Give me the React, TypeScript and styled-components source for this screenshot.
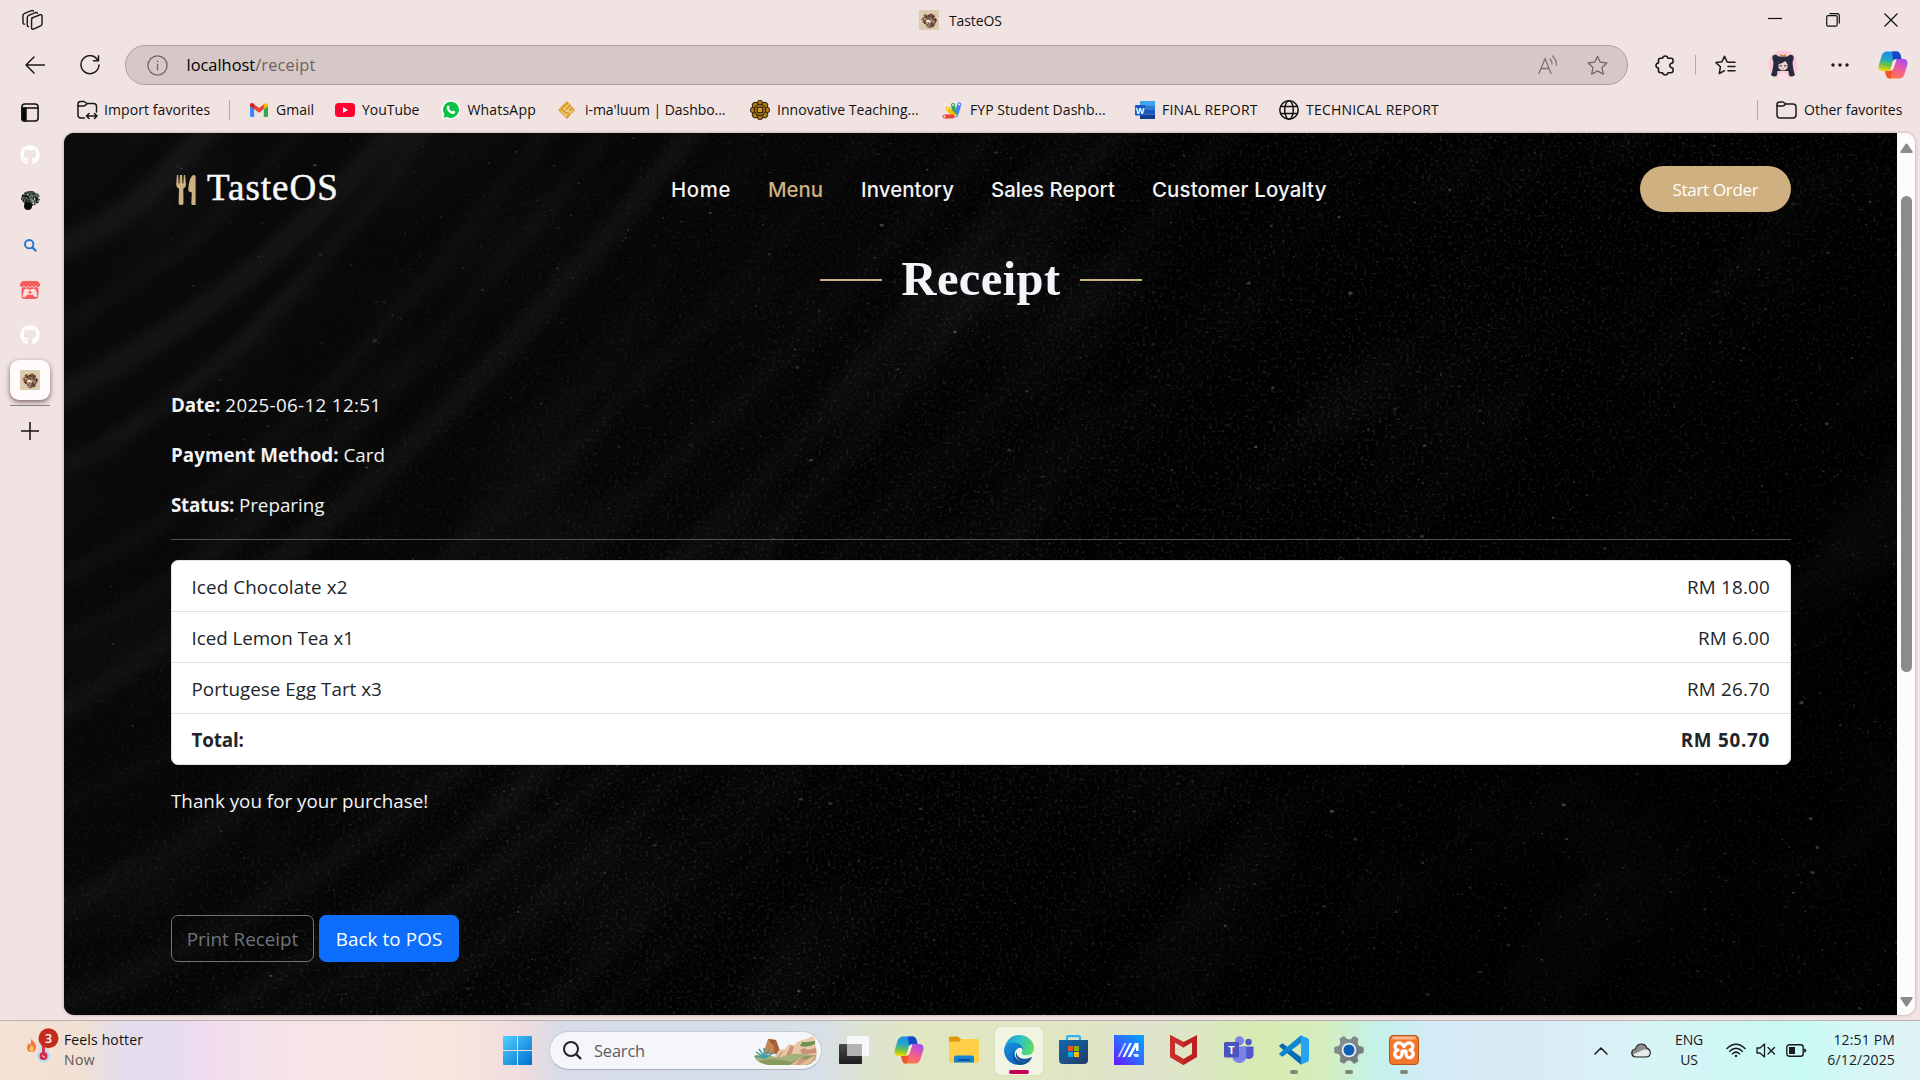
import React from "react";
import styled, { createGlobalStyle, css } from "styled-components";
import { FaGithub } from "react-icons/fa";
import { SiItchdotio } from "react-icons/si";

const GlobalStyle = createGlobalStyle`
  * { box-sizing: border-box; }
  html, body { margin: 0; padding: 0; }
  body { font-family: "Open Sans", "Noto Sans", sans-serif; overflow: hidden; }
`;

/* ---------- window frame ---------- */

const Screen = styled.div`
  width: 1920px;
  height: 1080px;
  display: flex;
  flex-direction: column;
  background: #f1e3e2;
  color: #111;
  white-space: nowrap;
`;

const TitleBar = styled.header`
  display: flex;
  height: 40px;
  align-items: center;
  padding-left: 22px;
`;

const TabTitle = styled.div`
  display: flex;
  align-items: center;
  gap: 10px;
  margin-left: 876px;
  font-size: 14px;
  letter-spacing: -0.1px;
`;

const WindowControls = styled.div`
  display: flex;
  align-items: center;
  gap: 44px;
  margin-left: auto;
  padding-right: 22px;
`;

const AddressRow = styled.div`
  display: flex;
  height: 50px;
  align-items: center;
  padding-left: 24px;
`;

const IconSlot = styled.div<{ $w: number; $ml?: number }>`
  display: flex;
  flex: none;
  justify-content: center;
  align-items: center;
  width: ${(p) => p.$w}px;
  margin-left: ${(p) => p.$ml ?? 0}px;
`;

const AddressBar = styled.div`
  display: flex;
  align-items: center;
  width: 1503px;
  height: 40px;
  margin-left: 25px;
  padding: 0 19px 0 21px;
  border: 1px solid #ab9f9e;
  border-radius: 20px;
  background: #d6c8c7;
  font-size: 16.4px;
`;

const Url = styled.div`
  flex: 1;
  margin-left: 18.5px;
  padding-bottom: 2px;
  color: #000;
  span { color: #6b6362; letter-spacing: 0.16px; }
`;

const VLine = styled.div<{ $ml: number }>`
  width: 1px;
  height: 20px;
  margin-left: ${(p) => p.$ml}px;
  background: #b5a8a7;
`;

const Body = styled.div`
  display: flex;
  height: 930px;
`;

const TabRail = styled.nav`
  display: flex;
  flex-direction: column;
  align-items: center;
  width: 64px;
  padding-top: 13px;
  padding-right: 4px;
`;

const RailItem = styled.div<{ $active?: boolean }>`
  display: flex;
  flex: none;
  align-items: center;
  justify-content: center;
  width: 40px;
  height: 40px;
  margin-bottom: 5px;
  border-radius: 9px;
  ${(p) =>
    p.$active &&
    css`
      background: #fffafb;
      box-shadow: 0 2px 5px rgba(60, 30, 30, 0.65);
    `}
`;

const RailToggle = styled.div`
  height: 32px;
  padding-right: 1px;
`;

const RailDivider = styled.div`
  width: 40px;
  height: 1px;
  margin-bottom: 16px;
  background: #8c8281;
`;

const Column = styled.div`
  display: flex;
  flex-direction: column;
  width: 1856px;
`;

const BookmarkBar = styled.div`
  display: flex;
  align-items: center;
  height: 43px;
  padding: 0 18px 4px 13px;
`;

const Bookmark = styled.div<{ $w: number; $gap?: number; $ls?: number }>`
  display: flex;
  flex: none;
  align-items: center;
  gap: ${(p) => p.$gap ?? 8}px;
  width: ${(p) => p.$w}px;
  font-size: 14px;
  letter-spacing: ${(p) => p.$ls ?? 0}px;
  svg { flex: none; }
`;

/* ---------- web page ---------- */

const Viewport = styled.div`
  display: flex;
  width: 1851px;
  height: 882px;
  border-radius: 10px;
  overflow: hidden;
  box-shadow: 0 0 3px rgba(90, 60, 60, 0.45);
`;

const Page = styled.main`
  position: relative;
  width: 1833px;
  padding: 0 106px 0 107px;
  background: #040404;
  color: #f2f3f5;
  isolation: isolate;
  font-size: 18.8px;
`;

const Backdrop = styled.svg`
  position: absolute;
  inset: 0;
  z-index: -1;
`;

const NavBar = styled.div`
  display: flex;
  align-items: center;
  height: 112px;
`;

const Brand = styled.div`
  display: flex;
  align-items: center;
  width: 500px;
  padding: 2px 0 0 5px;
  gap: 11px;
  font: 400 37px/40px "Liberation Serif", serif;
  letter-spacing: 1px;
  color: #f8f9fb;
  span { padding-bottom: 4px; -webkit-text-stroke: 0.5px #f8f9fb; }
`;

const NavLinks = styled.nav`
  display: flex;
  flex: 1;
  padding-top: 1px;
  font: 500 20.4px/26px Inter, sans-serif;
`;

const NavLink = styled.a<{ $w: number; $ls: number; $active?: boolean }>`
  width: ${(p) => p.$w}px;
  letter-spacing: ${(p) => p.$ls}px;
  color: ${(p) => (p.$active ? "#cfb081" : "#f3f3f4")};
`;

const OrderButton = styled.button`
  width: 151px;
  height: 46px;
  border: 0;
  border-radius: 23px;
  background: #cfb081;
  color: #fff;
  font: 400 17px "Open Sans", sans-serif;
  letter-spacing: -0.3px;
`;

const Heading = styled.h1`
  display: flex;
  align-items: center;
  justify-content: center;
  gap: 19px;
  height: 70px;
  margin: 0 0 75px;
  font: 700 48.5px/66px "Liberation Serif", serif;
  letter-spacing: 0.4px;
  color: #f4f5fa;
  &::before, &::after {
    content: "";
    width: 62px;
    height: 2px;
    background: #cfb081;
  }
  span { padding-bottom: 2px; }
`;

const Line = styled.p<{ $ls?: number }>`
  margin: 0 0 20px;
  line-height: 30px;
  letter-spacing: ${(p) => p.$ls ?? 0}px;
`;

const Label = styled.strong<{ $ls?: number }>`
  font-weight: 700;
  letter-spacing: ${(p) => p.$ls ?? 0}px;
`;

const Rule = styled.hr`
  height: 1px;
  margin: -1px 0 20px;
  border: 0;
  background: #505153;
`;

const Items = styled.ul`
  margin: 0 0 21px;
  padding: 0;
  list-style: none;
  border: 1px solid #dee2e6;
  border-radius: 7px;
  background: #fff;
  color: #212529;
`;

const Item = styled.li<{ $bold?: boolean }>`
  display: flex;
  justify-content: space-between;
  height: ${(p) => (p.$bold ? 50 : 51)}px;
  padding: 1px 20px 0 19.5px;
  line-height: 50px;
  border-bottom: ${(p) => (p.$bold ? "0" : "1px solid #dee2e6")};
  font-weight: ${(p) => (p.$bold ? 700 : 400)};
`;

const Tracked = styled.span<{ $ls: number }>`
  letter-spacing: ${(p) => p.$ls}px;
`;

const Actions = styled.div`
  display: flex;
  gap: 5px;
  padding-top: 79px;
`;

const ActionButton = styled.button<{ $primary?: boolean }>`
  width: ${(p) => (p.$primary ? 140 : 143)}px;
  height: 47px;
  padding: 0;
  border: 1px solid ${(p) => (p.$primary ? "#0d6efd" : "#6c757d")};
  border-radius: 7px;
  background: ${(p) => (p.$primary ? "#0d6efd" : "transparent")};
  color: ${(p) => (p.$primary ? "#fff" : "#6c757d")};
  font: 400 18.8px "Open Sans", sans-serif;
  letter-spacing: ${(p) => (p.$primary ? 0.12 : 0)}px;
`;

const Scrollbar = styled.div`
  display: flex;
  flex-direction: column;
  align-items: center;
  width: 18px;
  padding: 10px 0 8px 0;
  background: #fcfcfc;
`;

const Thumb = styled.div`
  width: 11px;
  height: 476px;
  margin: 42px 0 auto 1px;
  border-radius: 6px;
  background: #8b8b8b;
`;

/* ---------- taskbar ---------- */

const Taskbar = styled.footer`
  display: flex;
  align-items: center;
  height: 60px;
  border-top: 1px solid #b9b0b0;
  background: linear-gradient(
    90deg,
    #f4e3d5 0, #f1e0d3 80px, #e4dded 125px, #e3dcef 160px, #f0dbf0 200px,
    #f5e3ea 260px, #f8e5e4 380px, #fae6de 440px, #f1dcde 520px, #d7dce8 560px,
    #d5dde9 700px, #d7dfe8 820px, #dde3d2 860px, #e0e7c0 930px, #e0e6c4 1060px,
    #dfe3cc 1150px, #dbe7c2 1200px, #d7ebb2 1260px, #d6edba 1320px,
    #c6f1e4 1370px, #c6f0ef 1392px, #d4ebf5 1430px, #dbebf6 1540px,
    #d8f3f6 1640px, #ccf8f5 1760px, #c9faf6 1800px, #dcf4f5 1890px, #e0f2f4 1920px
  );
`;

const Weather = styled.div`
  display: flex;
  align-items: center;
  width: 503px;
  padding: 0 0 2px 24px;
  gap: 3px;
  font-size: 14px;
  line-height: 20px;
`;

const Muted = styled.div`
  color: #5c5757;
  letter-spacing: 0.4px;
`;

const SearchPill = styled.div`
  display: flex;
  align-items: center;
  width: 273px;
  height: 39px;
  margin: 0 4px 0 17px;
  padding: 0 3px 0 13px;
  border: 1px solid #c6cbd6;
  border-bottom-color: #aab0bd;
  border-radius: 20px;
  background: #f4f6fa;
  font-size: 16.4px;
  color: #5b5d61;
  span { flex: 1; margin-left: 12px; letter-spacing: -0.15px; }
`;

const AppCell = styled.div`
  display: flex;
  justify-content: center;
  width: 55px;
`;

const AppTile = styled.div<{ $active?: boolean }>`
  display: grid;
  grid-template-rows: 8px 30px 4px 6px;
  justify-items: center;
  align-items: center;
  width: 48px;
  height: 48px;
  border-radius: 5px;
  svg { grid-row: 2; }
  ${(p) =>
    p.$active &&
    css`
      background: #f1f4e2;
      box-shadow: 0 0 1px #aab08c;
    `}
`;

const RunMark = styled.i<{ $active?: boolean }>`
  grid-row: 4;
  width: ${(p) => (p.$active ? 20 : 8)}px;
  height: 4px;
  border-radius: 2px;
  background: ${(p) => (p.$active ? "#c4005a" : "#7c8878")};
`;

const Tray = styled.div`
  display: flex;
  flex: 1;
  align-items: center;
  padding: 0 25px 0 163px;
  font-size: 14px;
  line-height: 20px;
  color: #1b1b1b;
`;

const Language = styled.div`
  width: 28px;
  margin-left: 24px;
  padding-bottom: 1px;
  text-align: center;
  letter-spacing: -0.1px;
`;

const Clock = styled.div`
  margin-left: auto;
  padding-bottom: 2px;
  text-align: right;
  letter-spacing: 0.15px;
`;

/* ---------- drawings ---------- */

function rng(seed: number) {
  let s = seed;
  return () => {
    s = (s * 1664525 + 1013904223) % 4294967296;
    return s / 4294967296;
  };
}

const rand = rng(77);
const specks = Array.from({ length: 3400 }, () => {
  const x = Math.pow(rand(), 0.6) * 1833;
  const y = rand() * 882;
  const big = rand() > 0.96;
  return { x, y, r: big ? 1 + rand() * 0.9 : 0.4 + rand() * 0.6, o: 0.04 + rand() * (big ? 0.22 : 0.17) };
});
const ridges = Array.from({ length: 21 }, (_, k) => {
  const y0 = 70 + k * 84 + rand() * 46;
  const xt = 60 + y0 * (0.98 + rand() * 0.2);
  const m = 0.76 + rand() * 0.1;
  return {
    d: `M -30 ${y0 + 20} C ${xt * 0.35} ${y0 * m} ${xt * 0.6} ${y0 * 0.52} ${xt} -30`,
    w: 8 + rand() * 18,
    o: (0.027 + rand() * 0.027) * Math.max(0.4, 1 - k / 24),
  };
});

const StoneBackdrop = () => (
  <Backdrop width="1833" height="882">
    <defs>
      <filter id="soft" x="-5%" y="-5%" width="110%" height="110%"><feGaussianBlur stdDeviation="7" /></filter>
      <filter id="grain" x="0" y="0" width="100%" height="100%">
        <feTurbulence type="fractalNoise" baseFrequency="0.33" numOctaves="3" seed="4" />
        <feColorMatrix values="0 0 0 0 1  0 0 0 0 1  0 0 0 0 1  3.2 0 0 0 -1.72" />
      </filter>
      <filter id="clouds" x="0" y="0" width="100%" height="100%">
        <feTurbulence type="fractalNoise" baseFrequency="0.004 0.011" numOctaves="3" seed="12" />
        <feColorMatrix values="0 0 0 0 1  0 0 0 0 1  0 0 0 0 1  2 0 0 0 -0.9" />
      </filter>
      <linearGradient id="fade" x1="0" y1="0" x2="1" y2="0.35">
        <stop offset="0" stopColor="#0a0a0a" /><stop offset="0.45" stopColor="#050505" /><stop offset="0.8" stopColor="#010101" />
      </linearGradient>
      <linearGradient id="dim" x1="0" y1="0" x2="1" y2="0.2">
        <stop offset="0.4" stopColor="#000" stopOpacity="0" /><stop offset="0.75" stopColor="#000" stopOpacity="0.85" />
      </linearGradient>
      <linearGradient id="sand" x1="0" y1="0" x2="1" y2="0.45">
        <stop offset="0.1" stopColor="#fff" stopOpacity="0.1" /><stop offset="0.45" stopColor="#fff" stopOpacity="0.7" /><stop offset="0.7" stopColor="#fff" /><stop offset="1" stopColor="#fff" stopOpacity="0.5" />
      </linearGradient>
      <mask id="sandMask"><rect width="1833" height="882" fill="url(#sand)" /></mask>
    </defs>
    <rect width="1833" height="882" fill="url(#fade)" />
    <g filter="url(#soft)" fill="none" stroke="#fff">
      {ridges.map((r, i) => <path key={i} d={r.d} strokeWidth={r.w} strokeOpacity={r.o} />)}
    </g>
    <rect width="1833" height="882" fill="url(#dim)" />
    <g transform="rotate(-45 916 441)" opacity="0.03"><rect x="-200" y="-600" width="2300" height="2100" filter="url(#clouds)" /></g>
    <g mask="url(#sandMask)"><rect width="1833" height="882" filter="url(#grain)" opacity="0.12" /></g>
    <g fill="#fff">
      {specks.map((s, i) => <ellipse key={i} cx={s.x} cy={s.y} rx={s.r * 1.15} ry={s.r * 0.85} fillOpacity={s.o} />)}
    </g>
  </Backdrop>
);

const stroke = { fill: "none", stroke: "#1a1a1a", strokeWidth: 1.5, strokeLinecap: "round", strokeLinejoin: "round" } as const;

const WorkspacesIcon = () => (
  <svg width="22" height="22" viewBox="0 0 22 22" {...stroke}>
    <path d="M10 9 L19 5.5 Q21 5 21 7 V15 Q21 16.500 19.500 17.200 L12 20.500 Q10 21 10 19 V11 Q10 9.500 11.500 8.500" />
    <path d="M6.800 17.800 Q5.500 18 5.500 16 V9 Q5.500 7 7 6.200 L14 3.200 Q15.700 2.700 16.200 4" />
    <path d="M2.800 15.300 Q1 15.500 1 13.500 V6.500 Q1 4.800 2.700 4 L10 1.200 Q11.500 .8 12 1.800" />
  </svg>
);
const BackIcon = () => <svg width="20" height="18" viewBox="0 0 20 18" {...stroke}><path d="M9 1 L1 9 L9 17 M1 9 H19.500" /></svg>;
const ReloadIcon = () => <svg width="20" height="20" viewBox="0 0 20 20" {...stroke}><path d="M18 5.500 A9 9 0 1 0 19 10 M18.500 .8 V5.800 H13.500" /></svg>;
const InfoIcon = () => <svg width="21" height="21" viewBox="0 0 21 21" {...stroke} stroke="#6f6766" strokeWidth="1.3"><circle cx="10.500" cy="10.500" r="9.600" /><path d="M10.500 9.500 V15 M10.500 6 v.5" /></svg>;
const ReadAloudIcon = () => <svg width="20" height="20" viewBox="0 0 20 20" {...stroke} stroke="#7d7574" strokeWidth="1.3"><path d="M1 18.500 L7 3.500 L13 18.500 M3 13.500 H11 M12 4 Q14 6 14 9 M14.500 1 Q18.500 4.500 18.500 10" /></svg>;
const StarIcon = () => <svg width="21" height="21" viewBox="0 0 21 21" {...stroke} stroke="#6f6766" strokeWidth="1.3"><path d="M10.500 1.200 L13.300 7.200 L19.900 8 L15 12.500 L16.300 19.200 L10.500 15.900 L4.700 19.200 L6 12.500 L1.100 8 L7.700 7.200 Z" /></svg>;
const PuzzleIcon = () => <svg width="20" height="21" viewBox="0 0 20 21" {...stroke} strokeWidth="1.6"><path d="M7.500 3.300 Q8 1 10.300 1 Q12.600 1 13 3.300 H16 Q18 3.300 18 5.200 V7.800 Q14.800 8.300 14.800 10.500 Q14.800 12.700 18 13.200 V15.800 Q18 17.700 16 17.700 H13 Q12.600 20 10.300 20 Q8 20 7.500 17.700 H5.500 Q3.500 17.700 3.500 15.800 V13 Q1 12.700 1 10.500 Q1 8.300 3.500 8 V5.200 Q3.500 3.300 5.500 3.300 Z" /></svg>;
const FavoritesIcon = () => <svg width="21" height="20" viewBox="0 0 21 20" {...stroke}><path d="M13.500 7.200 L12 6.800 L9.500 1.200 L7 6.800 L1 7.600 L5.400 11.800 L4.300 18.500 L9.500 15.700 M13.500 7.200 H20 M13 11.500 H20 M13 15.800 H20" /></svg>;
const Avatar = () => (
  <svg width="30" height="30" viewBox="0 0 30 30">
    <circle cx="15" cy="15" r="14.600" fill="#fbcad8" />
    <path d="M4.500 6 Q8 3.500 10.500 6.500 H19.500 Q22 3.500 25.500 6 Q26 9 24.500 12 Q25 20 27 25 Q23 28 21 25 L20.500 21 H9.500 L9 25 Q7 28 3 25 Q5 20 5.500 12 Q4 9 4.500 6Z" fill="#262c3e" />
    <path d="M10.500 11 H19.500 V18 Q15 23 10.500 18Z" fill="#f5d5cb" /><path d="M10 14.500 Q10.500 7 15 8 Q20 7 20.500 15 Q18.500 13.500 17.500 11 Q14 13.500 10 14.500Z" fill="#262c3e" />
    <path d="M9.500 29 Q11 22.500 15 22 Q19 22.500 20.500 29 Q15 31 9.500 29" fill="#fbdfe9" /><path d="M12 6.500 L12.500 4 L15 5.500 L17.500 4 L18 6.500Z" fill="#c5822d" />
    <path d="M11.600 15.800 h2.400 M16 15.800 h2.400" stroke="#4a5c86" strokeWidth="1.400" /><path d="M14 18.800 h2" stroke="#d0707a" strokeWidth=".8" />
  </svg>
);
const CopilotIcon = ({ id }: { id: string }) => (
  <svg width="30" height="28" viewBox="0 0 30 28">
    <defs>
      <linearGradient id={id + "a"} x1="0.500" y1="0" x2="0.350" y2="1"><stop offset="0" stopColor="#1b8cf0" /><stop offset=".4" stopColor="#22a6c6" /><stop offset=".7" stopColor="#6cc04a" /><stop offset="1" stopColor="#f6d900" /></linearGradient>
      <linearGradient id={id + "b"} x1="0.800" y1="0" x2="0.300" y2="1"><stop offset="0" stopColor="#a24bf0" /><stop offset=".45" stopColor="#ee5aa0" /><stop offset="1" stopColor="#ff7a3d" /></linearGradient>
    </defs>
    <path d="M14 .5 H19 Q21.500 .5 22.500 4 L23.500 8 H18 Q15.500 8 14.500 11 L12 20 H5 Q-.5 20 .8 14 L3.500 5 Q5 .5 9 .5Z" fill={`url(#${id}a)`} />
    <path d="M14 .5 H18.500 Q21.500 .5 22.500 4 L23.500 8 H18 Q16 8 15 9.500Z" fill="#1746c9" />
    <path d="M18.500 8 H25 Q30.500 8 29.200 14 L26.500 23 Q25 27.500 21 27.500 H11.500 Q9 27.500 8 24 L7 20 H12 Q14.500 20 15.500 17Z" fill={`url(#${id}b)`} />
    <path d="M7 20 H12 Q14 20 15 18.500 L12.500 27.500 H11.500 Q9 27.500 8 24Z" fill="#f2542d" />
    <path d="M15.600 11 Q16 9.800 17.300 9.800 H18 L15 18.500 Q14.500 19.300 13.300 19.300 H13Z" fill="#f3e9ec" />
  </svg>
);
const FolderIcon = ({ arrows }: { arrows?: boolean }) => (
  <svg width="21" height="20" viewBox="0 0 21 20" {...stroke}>
    {arrows ? (
      <><path d="M7.500 18 H4 Q1 18 1 15 V4 Q1 1.500 3.500 1.500 H7 L10 3.500 H16.500 Q19.500 3.500 19.500 6.500 V12" /><path d="M10 16 H20 M12 13.500 L9.500 16 L12 18.500 M17.500 13.500 L20 16 L17.500 18.500" /></>
    ) : (
      <path d="M1 15 V4.500 Q1 2 3.500 2 H7 L10 4 H17 Q20 4 20 7 V15 Q20 18 17 18 H4 Q1 18 1 15Z" />
    )}
    <path d="M1 6 H6.500 Q8 6 10 3.700" />
  </svg>
);
const GmailIcon = () => (
  <svg width="18" height="14" viewBox="0 0 18 14">
    <path d="M0 3 L4.200 6 V14 H1.300 Q0 14 0 12.700Z" fill="#4285f4" /><path d="M18 3 L13.800 6 V14 H16.700 Q18 14 18 12.700Z" fill="#34a853" />
    <path d="M0 3 V2 C0 0 2 -.5 3.500 .8 L9 5 L14.500 .8 L13.800 6 L9 9.700 L4.200 6Z" fill="#ea4335" /><path d="M13.800 6 V1.300 C16 -.6 18 0 18 2 V3Z" fill="#fbbc04" /><path d="M0 3 V2 C0 0 2 -.6 4.200 1.300 V6Z" fill="#c5221f" />
  </svg>
);
const YouTubeIcon = () => <svg width="20" height="14" viewBox="0 0 20 14"><rect width="20" height="14" rx="3.500" fill="#ff0033" /><path d="M8 4 L13 7 L8 10Z" fill="#fff" /></svg>;
const WhatsAppIcon = () => (
  <svg width="20" height="20" viewBox="0 0 20 20">
    <path d="M10 .3 A9.500 9.500 0 1 1 5.500 18.300 L.5 19.600 L1.800 14.700 A9.500 9.500 0 0 1 10 .3Z" fill="#fff" />
    <path d="M10 1.700 A8.100 8.100 0 1 1 6 16.900 L2.500 17.800 L3.400 14.300 A8.100 8.100 0 0 1 10 1.700Z" fill="#0bc144" />
    <path d="M6.500 5.800 Q7.800 4.800 8.500 6.500 Q9 7.600 8.100 8.400 Q9 10.600 11.400 11.600 L12.500 10.600 Q14.800 11.300 14.200 12.700 Q13 14.600 10.500 13.700 Q6.500 12 5.700 8.200 Q5.600 6.600 6.500 5.800Z" fill="#fff" />
  </svg>
);
const MaluumIcon = () => (
  <svg width="18" height="18" viewBox="0 0 18 18">
    <path d="M9 0 L17 9 L9 18 L0 9Z" fill="#dba12b" />
    <path d="M10.500 3.500 L6 8 M5 6.500 L9.500 11 M12.800 6 L8 10.500 M3 9.500 L8 14.500 M10 9.500 L13.500 12.800 M15 8.500 L12.500 11 M7 15.500 L10 12.500" stroke="#f6ead2" strokeWidth="1" fill="none" />
  </svg>
);
const InnovativeIcon = () => (
  <svg width="20" height="20" viewBox="0 0 20 20">
    {[0, 45, 90, 135, 180, 225, 270, 315].map((a) => <circle key={a} cx="10" cy="3.300" r="2.900" fill="#b07a14" stroke="#33260c" strokeWidth="1" transform={`rotate(${a} 10 10)`} />)}
    <circle cx="10" cy="10" r="5.800" fill="#8f6414" stroke="#33260c" /><rect x="7.500" y="7.500" width="5" height="5" fill="#d09a27" stroke="#3a2b0c" />
  </svg>
);
const ScriptIcon = () => (
  <svg width="20" height="18" viewBox="0 0 20 18" strokeLinecap="round" strokeWidth="4">
    <path d="M14 14.500 L17.300 3.500" stroke="#4285f4" /><path d="M12.500 13.500 L11 4" stroke="#34a853" /><path d="M11.500 13.500 L5.500 7.500" stroke="#fbbc04" /><path d="M10.500 15.500 H2.500" stroke="#ea4335" />
    <g fill="#fff"><circle cx="2.500" cy="15.500" r=".9" /><circle cx="5.500" cy="7.500" r=".9" /><circle cx="11" cy="4" r=".9" /><circle cx="17.300" cy="3.500" r=".9" /><circle cx="14" cy="14.500" r=".9" /></g>
  </svg>
);
const LetterW = styled.text`font: 700 9px "Open Sans", sans-serif; fill: #fff;`;
const LetterT = styled.text`font: 700 11px "Open Sans", sans-serif; fill: #fff;`;
const LetterBadge = styled.text`font: 600 12.5px "Open Sans", sans-serif; fill: #fff;`;
const WordIcon = () => (
  <svg width="20" height="18" viewBox="0 0 20 18">
    <rect x="5" width="15" height="4.800" fill="#41a5ee" /><rect x="5" y="4.500" width="15" height="4.500" fill="#2b7cd3" /><rect x="5" y="9" width="15" height="4.500" fill="#185abd" /><rect x="5" y="13.500" width="15" height="4.500" fill="#103f91" />
    <rect y="4" width="10.500" height="10.500" rx="1" fill="#185abd" /><LetterW x=".7" y="12.500">W</LetterW>
  </svg>
);
const GlobeIcon = () => <svg width="20" height="20" viewBox="0 0 20 20" {...stroke} stroke="#111"><circle cx="10" cy="10" r="9.200" /><ellipse cx="10" cy="10" rx="4.300" ry="9.200" /><path d="M1.800 6.500 H18.200 M1.800 13.500 H18.200" /></svg>;

const bits = rng(9);
const foodDots = Array.from({ length: 130 }, () => {
  const a = bits() * 6.283, r = Math.sqrt(bits()) * 7.2;
  return { x: 10 + Math.cos(a) * r, y: 10.500 + Math.sin(a) * r, c: ["#5b3728", "#7b4a33", "#a67b63", "#3f2a24", "#6a5a60", "#c79a7c"][Math.floor(bits() * 6)] };
});
const TasteFavicon = () => (
  <svg width="20" height="20" viewBox="0 0 20 20">
    <rect width="20" height="20" fill="#dccdb0" />
    {foodDots.map((d, i) => <rect key={i} x={d.x - 0.700} y={d.y - 0.700} width="1.500" height="1.500" fill={d.c} />)}
    <ellipse cx="9" cy="11" rx="2.200" ry="1.500" fill="#efe0d2" />
  </svg>
);
const leafDots = Array.from({ length: 150 }, () => {
  const a = bits() * 6.283, r = Math.sqrt(bits());
  return { x: 10.500 + Math.cos(a) * r * 8.700, y: 8.500 + Math.sin(a) * r * 6.800, c: ["#16201a", "#222c26", "#3a443c", "#0b0f0c", "#7d867b", "#59645a"][Math.floor(bits() * 6)] };
});
const FlowerFavicon = () => (
  <svg width="20" height="20" viewBox="0 0 20 20">
    {leafDots.map((d, i) => <rect key={i} x={d.x - 0.800} y={d.y - 0.800} width="1.800" height="1.600" fill={d.c} />)}
    <circle cx="8" cy="16" r="4" fill="#0a0c0a" />
  </svg>
);
const TabsIcon = () => <svg width="18" height="19" viewBox="0 0 18 19" fill="none" stroke="#151515" strokeWidth="1.600"><rect x=".9" y="1" width="16.200" height="17" rx="3" /><path d="M1 5 H17" /><path d="M1 5 H5 V18 H3 Q1 18 1 16Z" fill="#000" /></svg>;
const FindIcon = () => <svg width="13" height="13" viewBox="0 0 13 13" fill="none" stroke="#1a76d2"><circle cx="5.200" cy="5.200" r="4.200" strokeWidth="1.900" /><path d="M8.300 8.300 L12.200 12.200" strokeWidth="2.200" /></svg>;
const PlusIcon = () => <svg width="18" height="18" viewBox="0 0 18 18" stroke="#111" strokeWidth="1.500"><path d="M9 0 V18 M0 9 H18" /></svg>;

const CutleryIcon = () => (
  <svg width="20" height="30" viewBox="0 0 20 30" fill="#cfb081">
    <path d="M.9 0 H2.200 L2.700 8.500 H3.500 L3.900 0 H6.100 L6.500 8.500 H7.300 L7.800 0 H9.100 L10 9.500 Q10.200 12 7.300 13.800 L7.500 28.500 Q7.500 30 5 30 Q2.600 30 2.600 28.500 L3 13.800 Q0 12 .2 9.500Z" />
    <path d="M17 0 Q19.600 0 19.600 1 V30 H16.800 Q15.300 30 15.300 28.500 L15.800 17.500 Q12.500 17 12.300 15.500 Q12.500 3 17 0Z" />
  </svg>
);
const Arrow = ({ down }: { down?: boolean }) => <svg width="13" height="11" viewBox="0 0 13 11" fill="#8b8b8b"><path transform={down ? "rotate(180 6.500 5.500)" : undefined} d="M5.500 1 Q6.500 0 7.500 1 L12.500 8.500 Q13 10 11.700 10 H1.300 Q0 10 .5 8.500Z" /></svg>;

const WeatherIcon = () => (
  <svg width="37" height="44" viewBox="0 0 37 44">
    <path d="M7 11 Q12 15 12 19 Q12 24 7.500 24 Q3 24 3 19.500 Q3 17 5 15 L6 17 Q7.500 15 7 11Z" fill="#f2793f" /><path d="M7.500 17 Q10 20 9.500 22 Q8.500 23.500 7 23.500 Q5 22.500 5.500 20.500Z" fill="#ffc85c" />
    <rect x="15.500" y="6" width="8" height="24" rx="4" fill="#bfe0f4" /><circle cx="19.500" cy="28" r="6.500" fill="#b9dcf2" /><path d="M19.500 10 V28" stroke="#e0344c" strokeWidth="3" /><circle cx="19.500" cy="28" r="4" fill="#d9284a" /><path d="M18 27.500 L21 29.500" stroke="#fff" strokeWidth="1" />
    <circle cx="24.500" cy="10.200" r="10" fill="#c42b1c" /><LetterBadge x="21" y="14.700">3</LetterBadge>
  </svg>
);
const StartIcon = () => (
  <svg width="29" height="29" viewBox="0 0 29 29">
    <defs><linearGradient id="win" x1="0" y1="0" x2="1" y2="1"><stop offset="0" stopColor="#52d0ff" /><stop offset="1" stopColor="#006fcf" /></linearGradient></defs>
    <path fill="url(#win)" d="M1 0 H14 V14 H0 V1Q0 0 1 0Z M15 0 H28 Q29 0 29 1 V14 H15Z M0 15 H14 V29 H1 Q0 29 0 28Z M15 15 H29 V28 Q29 29 28 29 H15Z" />
  </svg>
);
const MagnifierIcon = () => <svg width="19" height="19" viewBox="0 0 19 19" fill="none" stroke="#222"><circle cx="8" cy="8" r="7" strokeWidth="2" /><path d="M13 13 L18 18" strokeWidth="2.400" /></svg>;
const CanyonArt = () => (
  <svg width="64" height="30" viewBox="0 0 64 30">
    <path d="M9 18 L14 3 L22 4 L27 18Z" fill="#c88350" /><path d="M14 3 L22 4 L19 9Z" fill="#96573a" /><path d="M19 9 L22 4 L27 18 H21Z" fill="#a9633a" />
    <path d="M19 23 L25 14 L31 13 L35 8 L40 10 L43 6 L48 4 L60 1 L63 16 L62 25 L40 26Z" fill="#e9c6a8" />
    <path d="M35 13 L37 9 L40 10 L37 20 L31 21Z M46 14 L50 12 L54 14 L62 12 L62 17 L48 19Z" fill="#c99375" /><path d="M26 17 L30 14 L25 22 H22Z" fill="#d4a382" />
    <path d="M46 10 L48 6 L61 4 L61 8 Q53 12 46 10Z" fill="#6c9450" /><path d="M45 6 L59 0 L61 5 L52 6Z" fill="#edcdb0" />
    <path d="M0 20 Q8 16 24 22 Q44 14 62 21 Q58 29 50 29 H14 Q2 27 0 20Z" fill="#a3b27b" /><path d="M5 25 Q20 21 38 26 L52 20 L62 19 Q60 29 50 29 H16Q8 28 5 25Z" fill="#87995f" />
    <path d="M36 29 L46 22 L52 24 L61 19 Q60 28 50 29Z" fill="#e5b794" /><path d="M46 22 L52 24 L46 29 H42Z" fill="#c99a7a" />
    <path d="M11 22 L2 16 M11 22 L5 13 M11 22 L10 12 M11 22 L15 14 M11 22 L19 17 M11 22 L1 20" stroke="#3f9ea3" strokeWidth="1.500" />
  </svg>
);
const TaskViewIcon = () => (
  <svg width="30" height="28" viewBox="0 0 30 28">
    <defs><linearGradient id="tv" x1="0" y1="0" x2="0" y2="1"><stop offset="0" stopColor="#4a4a4a" /><stop offset="1" stopColor="#1e1e1e" /></linearGradient></defs>
    <rect y="8" width="23" height="20" rx="1" fill="url(#tv)" /><rect x="8" width="22" height="20" rx="1" fill="#f7f8f8" /><rect x="8" y="8" width="15" height="12" fill="#b3b3b3" />
  </svg>
);
const ExplorerIcon = () => (
  <svg width="30" height="27" viewBox="0 0 30 27">
    <path d="M0 2 Q0 .5 1.500 .5 H9 L12 3.500 H28 V10 H0Z" fill="#dd9b0c" /><path d="M0 6.500 Q0 5.500 1 5.500 H10 L12.500 3 H28.500 Q30 3 30 4.500 V25 Q30 26.500 28.500 26.500 H1.500 Q0 26.500 0 25Z" fill="#ffcf48" />
    <path d="M5 26.500 V21.500 Q5 19.500 7 19.500 H23 Q25 19.500 25 21.500 V26.500Z" fill="#1583d8" /><rect x="9" y="23" width="12" height="1.800" rx=".9" fill="#0b4d8c" />
  </svg>
);
const EdgeIcon = () => (
  <svg width="30" height="30" viewBox="0 0 30 30">
    <defs>
      <linearGradient id="e1" x1="0" y1=".3" x2="1" y2=".5"><stop offset="0" stopColor="#1c9de0" /><stop offset=".55" stopColor="#30c5c0" /><stop offset="1" stopColor="#62dc5a" /></linearGradient>
      <linearGradient id="e2" x1="0" y1="0" x2=".6" y2="1"><stop offset="0" stopColor="#1a95dd" /><stop offset="1" stopColor="#0a62c4" /></linearGradient>
    </defs>
    <path d="M.8 12 C2.500 4.500 8.500 0 15 0 C23.500 0 30 6 30 13 C30 18 26 20.500 22.500 20.500 C19.500 20.500 17 19.300 17.500 17.800 C20 14.500 17 9.500 11.500 9.500 C7 9.500 3 10.500 .8 12Z" fill="url(#e1)" />
    <path d="M0 15 C0 10 4.500 7.500 9.500 7.500 C16 7.500 20 12 18.800 15.800 C17.500 12 10.500 13 10.500 19.500 C10.500 25 15 29 19 29.300 C8.500 32 0 24.500 0 15Z" fill="url(#e2)" />
    <path d="M10.500 14.500 C8.500 21 13 27 20 26.500 C23.500 26 26 24.500 28.200 22 C26 27.500 21 30 16 30 C10 29 6.500 21 10.500 14.500Z" fill="#0f4f98" />
    <path d="M12.300 17 C12.500 13.500 15.500 12 17.800 13.200 C19.300 15 17.800 16.500 17.500 17.800 C17 19.500 20 21 23.500 20.300 C27 19.600 28 19.500 27.500 21 C22 25.500 12.500 24 12.300 17Z" fill="#f1f4e2" />
    <path d="M12.300 17 C13 24.500 22 25.500 28 21.500 C25 27.500 18 28 14.500 25 C11.500 22.500 11.500 19 12.300 17Z" fill="#11539f" />
  </svg>
);
const StoreIcon = () => (
  <svg width="29" height="29" viewBox="0 0 29 29">
    <defs><linearGradient id="st" x1="0" y1="0" x2="1" y2="1"><stop offset="0" stopColor="#0f6bb0" /><stop offset="1" stopColor="#223a66" /></linearGradient></defs>
    <path d="M8 6 V2.500 Q8 1.200 9.300 1.200 H19.700 Q21 1.200 21 2.500 V6" fill="none" stroke="#2fb4ef" strokeWidth="2.200" /><path d="M0 5 H29 V25 Q29 29 25 29 H4 Q0 29 0 25Z" fill="url(#st)" />
    <path d="M9 11 h5 v5 h-5Z" fill="#f25022" /><path d="M15 11 h5 v5 h-5Z" fill="#7fba00" /><path d="M9 17 h5 v5 h-5Z" fill="#00a4ef" /><path d="M15 17 h5 v5 h-5Z" fill="#ffb900" />
  </svg>
);
const MyAsusIcon = () => (
  <svg width="30" height="30" viewBox="0 0 30 30">
    <defs><linearGradient id="as" x1="1" y1="0" x2="0" y2="1"><stop offset="0" stopColor="#00a8ff" /><stop offset=".5" stopColor="#2f6bff" /><stop offset="1" stopColor="#6a12ff" /></linearGradient></defs>
    <rect width="30" height="30" fill="url(#as)" /><path d="M3.500 22 L10.500 8 H12.500 L5.500 22Z" fill="#b9d0ff" /><path d="M8.500 22 L15.500 8 H17.800 L10.800 22Z" fill="#fff" /><path d="M13.500 22 L21 8 H24.500 V16 H22 V12 L16.500 22Z" fill="#fff" /><path d="M19 19 H24.500 V22 H21Z" fill="#dfe9ff" />
  </svg>
);
const McAfeeIcon = () => <svg width="27" height="30" viewBox="0 0 27 30"><path d="M0 0 L13.500 7 L27 0 V22 L13.500 30 L0 22Z M5 7.500 V19 L13.500 24 L22 19 V7.500 L13.500 12.500Z" fill="#bd2020" fillRule="evenodd" /><path d="M0 0 L13.500 7 V12.500 L5 7.500 V19 L13.500 24 V30 L0 22Z" fill="#c9302c" /></svg>;
const TeamsIcon = () => (
  <svg width="30" height="28" viewBox="0 0 30 28">
    <circle cx="24.500" cy="6" r="3.200" fill="#5059c9" /><path d="M18 10.500 H28.500 Q29.500 10.500 29.500 11.500 V18 Q29.500 23 24.500 23 Q21 23 20 20Z" fill="#5059c9" />
    <circle cx="15.500" cy="4.700" r="4.500" fill="#7b83eb" /><path d="M8 10.500 H21 Q22.300 10.500 22.300 12 V19.500 Q22 27 15.300 27 Q9 27 8 20Z" fill="#7b83eb" />
    <rect y="6" width="15" height="15.500" rx="1.500" fill="#4b53bc" /><LetterT x="4.200" y="18">T</LetterT>
  </svg>
);
const VSCodeIcon = () => (
  <svg width="30" height="30" viewBox="0 0 30 30">
    <path d="M.5 10.500 L2.500 8.800 Q3.300 8.200 4.200 8.800 L22 22 V29.800 L.5 11.800 Q0 11.200 .5 10.500Z" fill="#0a6ab5" />
    <path d="M.5 19.500 L2.500 21.200 Q3.300 21.800 4.200 21.200 L22 8 V.2 L.5 18.200 Q0 18.800 .5 19.500Z" fill="#0f86d2" />
    <path d="M21.700 29.800 Q20.800 29.300 22 28 V2 Q20.800 .7 21.700 .2 L28.800 3.300 Q30 3.900 30 5 V25 Q30 26.100 28.800 26.700Z" fill="#27a3f1" />
  </svg>
);
const SettingsIcon = () => (
  <svg width="30" height="30" viewBox="0 0 30 30">
    <defs><linearGradient id="gear" x1="0" y1="0" x2="1" y2="1"><stop offset="0" stopColor="#8f969b" /><stop offset="1" stopColor="#6a7178" /></linearGradient></defs>
    <path fill="url(#gear)" stroke="#7d848a" strokeLinejoin="round" strokeWidth="1.500" d="M10 2 L13 5 H17 L20 2 L23.500 4 L22.800 8 L24.500 11.500 L29 12.800 V17.200 L24.500 18.500 L22.800 22 L23.500 26 L20 28 L17 25 H13 L10 28 L6.500 26 L7.200 22 L5.500 18.500 L1 17.200 V12.800 L5.500 11.500 L7.200 8 L6.500 4Z" />
    <circle cx="15" cy="15" r="7.300" fill="#e5eef2" /><circle cx="15" cy="15" r="5.500" fill="#0c60b4" />
  </svg>
);
const XamppIcon = () => (
  <svg width="30" height="30" viewBox="0 0 30 30">
    <rect x=".5" y=".5" width="29" height="29" rx="3.500" fill="#f2762a" stroke="#b9561c" /><rect x="3" y="1.500" width="24" height="3" rx="1.500" fill="#fbb48a" />
    <path d="M15 11.500 Q12.500 7 8.500 8 Q5 9.800 6.500 13.300 Q7.500 14.800 9 15 Q5 16.500 5.800 20 Q7.500 23.500 11 22.500 Q13.500 21 13 16 H17 Q16.500 21 19 22.500 Q22.500 23.500 24.200 20 Q25 16.500 21 15 Q22.500 14.800 23.500 13.300 Q25 9.800 21.500 8 Q17.500 7 15 11.500Z" fill="none" stroke="#fff" strokeWidth="3.200" strokeLinejoin="round" />
  </svg>
);
const CloudIcon = () => (
  <svg width="20" height="15" viewBox="0 0 20 15"><path d="M5 14 Q.8 14 .8 10 Q.8 6.500 4.500 6 Q6 1 10.500 1 Q14.500 1 15.800 5 Q19.300 6 19.200 10 Q19 14 15 14Z" fill="#8d8d8d" stroke="#222" strokeWidth="1.200" /><path d="M5 13.300 Q2 13 3 11 L13 6.500 Q18.500 6 18.500 10 Q18.500 13.300 15 13.300Z" fill="#e9ecec" /></svg>
);
const WifiIcon = () => <svg width="20" height="15" viewBox="0 0 20 15" {...stroke} strokeWidth="1.500"><path d="M1 5.500 Q10 -3 19 5.500 M3.700 8.200 Q10 2.300 16.300 8.200 M6.500 10.800 Q10 7.500 13.500 10.800" /><circle cx="10" cy="13" r="1.200" fill="#1a1a1a" stroke="none" /></svg>;
const MuteIcon = () => <svg width="20" height="15" viewBox="0 0 20 15" {...stroke} strokeWidth="1.300"><path d="M1 5 H4 L8.500 1 V14 L4 10 H1Z M12 4.500 L18.500 11 M18.500 4.500 L12 11" /></svg>;
const BatteryIcon = () => <svg width="21" height="13" viewBox="0 0 21 13"><rect x=".8" y=".8" width="16.400" height="11.400" rx="2.500" fill="none" stroke="#1a1a1a" strokeWidth="1.400" /><rect x="3" y="3" width="6" height="7" fill="#1a1a1a" /><path d="M18.200 4.500 Q20.300 4.500 20.300 6.500 Q20.300 8.500 18.200 8.500Z" fill="#1a1a1a" /></svg>;

/* ---------- data ---------- */

const bookmarks = [
  { name: "Gmail", w: 85, ls: 0, icon: <GmailIcon /> },
  { name: "YouTube", w: 106, ls: -0.04, gap: 7, icon: <YouTubeIcon /> },
  { name: "WhatsApp", w: 117, ls: 0.18, icon: <WhatsAppIcon />, gap: 6.5 },
  { name: "i-ma'luum | Dashbo...", w: 192, ls: -0.06, icon: <MaluumIcon />, gap: 9 },
  { name: "Innovative Teaching...", w: 192, ls: 0.05, icon: <InnovativeIcon />, gap: 7 },
  { name: "FYP Student Dashb...", w: 193, ls: 0.05, icon: <ScriptIcon />, gap: 8 },
  { name: "FINAL REPORT", w: 144, ls: 0.17, icon: <WordIcon />, gap: 7 },
  { name: "TECHNICAL REPORT", w: 170, ls: 0.2, icon: <GlobeIcon />, gap: 7 },
];

const navLinks = [
  { name: "Home", w: 97, ls: 0.6 },
  { name: "Menu", w: 93, ls: -0.05, active: true },
  { name: "Inventory", w: 130, ls: 0.1 },
  { name: "Sales Report", w: 161, ls: 0.05 },
  { name: "Customer Loyalty", w: 176, ls: 0.17 },
];

const orderItems = [
  { name: "Iced Chocolate x2", price: "RM 18.00", ls: 0.12 },
  { name: "Iced Lemon Tea x1", price: "RM 6.00", ls: -0.05 },
  { name: "Portugese Egg Tart x3", price: "RM 26.70", ls: 0.02 },
];

const apps = [
  { id: "task-view", icon: <TaskViewIcon /> },
  { id: "copilot", icon: <CopilotIcon id="cpt" /> },
  { id: "explorer", icon: <ExplorerIcon /> },
  { id: "edge", icon: <EdgeIcon />, active: true, running: true },
  { id: "store", icon: <StoreIcon /> },
  { id: "myasus", icon: <MyAsusIcon /> },
  { id: "mcafee", icon: <McAfeeIcon /> },
  { id: "teams", icon: <TeamsIcon /> },
  { id: "vscode", icon: <VSCodeIcon />, running: true },
  { id: "settings", icon: <SettingsIcon />, running: true },
  { id: "xampp", icon: <XamppIcon />, running: true },
];

export default function App() {
  return (
    <Screen>
      <GlobalStyle />
      <TitleBar>
        <IconSlot $w={21}><WorkspacesIcon /></IconSlot>
        <TabTitle><TasteFavicon />TasteOS</TabTitle>
        <WindowControls>
          <svg width="14" height="14" stroke="#111" strokeWidth="1.200"><path d="M0 5.500 H14" /></svg>
          <svg width="14" height="14" fill="none" stroke="#111" strokeWidth="1.200"><rect x=".7" y="2.700" width="10.500" height="10.500" rx="1.500" /><path d="M3.500 .7 H11 Q13.300 .7 13.300 3 V10.500" /></svg>
          <svg width="14" height="14" stroke="#111" strokeWidth="1.200"><path d="M.5 .5 L13.500 13.500 M13.500 .5 L.5 13.500" /></svg>
        </WindowControls>
      </TitleBar>

      <AddressRow>
        <IconSlot $w={21}><BackIcon /></IconSlot>
        <IconSlot $w={21} $ml={34}><ReloadIcon /></IconSlot>
        <AddressBar>
          <InfoIcon />
          <Url>localhost<span>/receipt</span></Url>
          <IconSlot $w={20}><ReadAloudIcon /></IconSlot>
          <IconSlot $w={21} $ml={29}><StarIcon /></IconSlot>
        </AddressBar>
        <IconSlot $w={20} $ml={27}><PuzzleIcon /></IconSlot>
        <VLine $ml={20} />
        <IconSlot $w={21} $ml={19}><FavoritesIcon /></IconSlot>
        <IconSlot $w={30} $ml={32}><Avatar /></IconSlot>
        <IconSlot $w={20} $ml={32}><svg width="20" height="4" fill="#1a1a1a"><circle cx="3" cy="2" r="1.700" /><circle cx="10" cy="2" r="1.700" /><circle cx="17" cy="2" r="1.700" /></svg></IconSlot>
        <IconSlot $w={30} $ml={28}><CopilotIcon id="cpb" /></IconSlot>
      </AddressRow>

      <Body>
        <TabRail>
          <RailToggle><TabsIcon /></RailToggle>
          <RailItem><FaGithub size={20} color="#fff" /></RailItem>
          <RailItem><FlowerFavicon /></RailItem>
          <RailItem><FindIcon /></RailItem>
          <RailItem><SiItchdotio size={20} color="#fa5c5c" /></RailItem>
          <RailItem><FaGithub size={20} color="#fff" /></RailItem>
          <RailItem $active><TasteFavicon /></RailItem>
          <RailDivider />
          <PlusIcon />
        </TabRail>

        <Column>
          <BookmarkBar>
            <Bookmark $w={151} $gap={6} $ls={0.08}><FolderIcon arrows />Import favorites</Bookmark>
            <VLine $ml={1} />
            <IconSlot $w={20} />
            {bookmarks.map((b) => (
              <Bookmark key={b.name} $w={b.w} $ls={b.ls} $gap={b.gap}>{b.icon}{b.name}</Bookmark>
            ))}
            <VLine $ml={308} />
            <IconSlot $w={18} />
            <Bookmark $w={126} $gap={7}><FolderIcon />Other favorites</Bookmark>
          </BookmarkBar>

          <Viewport>
            <Page>
              <StoneBackdrop />
              <NavBar>
                <Brand><CutleryIcon /><span>TasteOS</span></Brand>
                <NavLinks>
                  {navLinks.map((l) => <NavLink key={l.name} $w={l.w} $ls={l.ls} $active={l.active}>{l.name}</NavLink>)}
                </NavLinks>
                <OrderButton>Start Order</OrderButton>
              </NavBar>
              <Heading><span>Receipt</span></Heading>
              <Line $ls={0.33}><Label $ls={-0.15}>Date:</Label> 2025-06-12 12:51</Line>
              <Line><Label $ls={0.05}>Payment Method:</Label> Card</Line>
              <Line><Label $ls={-0.29}>Status:</Label> Preparing</Line>
              <Rule />
              <Items>
                {orderItems.map((o) => (
                  <Item key={o.name}><Tracked $ls={o.ls}>{o.name}</Tracked><Tracked $ls={0.22}>{o.price}</Tracked></Item>
                ))}
                <Item $bold><Tracked $ls={-0.15}>Total:</Tracked><Tracked $ls={0.75}>RM 50.70</Tracked></Item>
              </Items>
              <Line $ls={0.02}>Thank you for your purchase!</Line>
              <Actions>
                <ActionButton>Print Receipt</ActionButton>
                <ActionButton $primary>Back to POS</ActionButton>
              </Actions>
            </Page>
            <Scrollbar><Arrow /><Thumb /><Arrow down /></Scrollbar>
          </Viewport>
        </Column>
      </Body>

      <Taskbar>
        <Weather>
          <WeatherIcon />
          <div><Tracked $ls={0.14}>Feels hotter</Tracked><Muted>Now</Muted></div>
        </Weather>
        <StartIcon />
        <SearchPill><MagnifierIcon /><span>Search</span><CanyonArt /></SearchPill>
        {apps.map((a) => (
          <AppCell key={a.id}>
            <AppTile $active={a.active}>{a.icon}{a.running && <RunMark $active={a.active} />}</AppTile>
          </AppCell>
        ))}
        <Tray>
          <svg width="14" height="8" {...stroke}><path d="M1 7 L7 1 L13 7" /></svg>
          <IconSlot $w={20} $ml={23}><CloudIcon /></IconSlot>
          <Language>ENG<br />US</Language>
          <IconSlot $w={20} $ml={23}><WifiIcon /></IconSlot>
          <IconSlot $w={20} $ml={10}><MuteIcon /></IconSlot>
          <IconSlot $w={21} $ml={10}><BatteryIcon /></IconSlot>
          <Clock>12:51 PM<br />6/12/2025</Clock>
        </Tray>
      </Taskbar>
    </Screen>
  );
}
